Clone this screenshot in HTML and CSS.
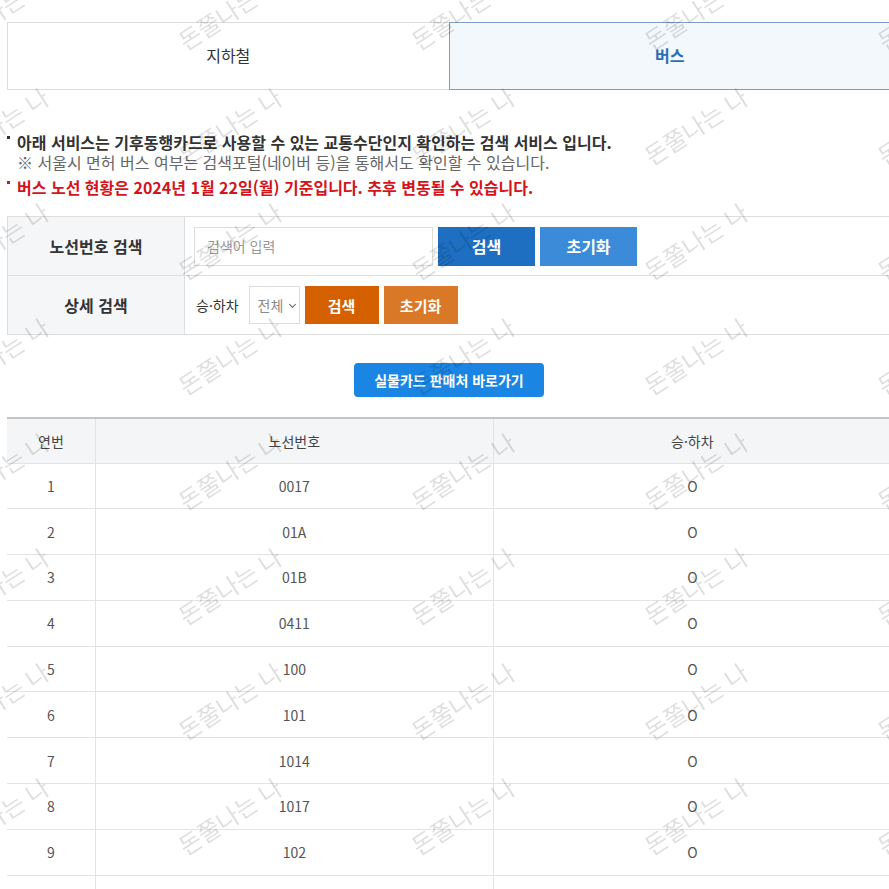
FILE: index.html
```html
<!DOCTYPE html>
<html lang="ko">
<head>
    <meta charset="UTF-8">
    <meta name="viewport" content="width=device-width, initial-scale=1.0">
    <title>기후동행카드 사용처 검색</title>
    <link rel="stylesheet" href="styles.css">
</head>
<body>

<div class="wrap">
    <div class="tabs">
        <a class="tab">지하철</a>
        <a class="tab active">버스</a>
    </div>

    <div class="notice">
        <p class="bullet">아래 서비스는 기후동행카드로 사용할 수 있는 교통수단인지 확인하는 검색 서비스 입니다.</p>
        <p class="sub">※ 서울시 면허 버스 여부는 검색포털(네이버 등)을 통해서도 확인할 수 있습니다.</p>
        <p class="bullet red">버스 노선 현황은 2024년 1월 22일(월) 기준입니다. 추후 변동될 수 있습니다.</p>
    </div>

    <div class="search-box">
        <div class="search-row">
            <div class="label">노선번호 검색</div>
            <div class="field">
                <input type="text" class="keyword" placeholder="검색어 입력">
                <button class="btn btn-blue">검색</button>
                <button class="btn btn-blue-light">초기화</button>
            </div>
        </div>
        <div class="search-row">
            <div class="label">상세 검색</div>
            <div class="field">
                <span class="field-name">승·하차</span>
                <span class="sel-wrap">
                    <select class="sel">
                        <option>전체</option>
                        <option>O</option>
                        <option>X</option>
                    </select>
                </span>
                <button class="btn btn-orange small">검색</button>
                <button class="btn btn-orange-light small">초기화</button>
            </div>
        </div>
    </div>

    <div class="link-area">
        <a class="link-btn">실물카드 판매처 바로가기</a>
    </div>

    <table class="list">
        <colgroup>
            <col style="width: 10%">
            <col style="width: 45%">
            <col style="width: 45%">
        </colgroup>
        <thead>
            <tr><th>연번</th><th>노선번호</th><th>승·하차</th></tr>
        </thead>
        <tbody>
            <tr><td>1</td><td>0017</td><td>O</td></tr>
            <tr><td>2</td><td>01A</td><td>O</td></tr>
            <tr><td>3</td><td>01B</td><td>O</td></tr>
            <tr><td>4</td><td>0411</td><td>O</td></tr>
            <tr><td>5</td><td>100</td><td>O</td></tr>
            <tr><td>6</td><td>101</td><td>O</td></tr>
            <tr><td>7</td><td>1014</td><td>O</td></tr>
            <tr><td>8</td><td>1017</td><td>O</td></tr>
            <tr><td>9</td><td>102</td><td>O</td></tr>
            <tr><td></td><td></td><td></td></tr>
        </tbody>
    </table>
</div>

<!-- watermark overlay -->
<div class="watermark"><div class="wm-grid" id="wmGrid"></div></div>

<script>
    var grid = document.getElementById("wmGrid");
    for (var i = 0; i < 45; i++) {
        var cell = document.createElement("div");
        cell.className = "wm";
        cell.innerHTML = "<span>돈쭐나는 나</span>";
        grid.appendChild(cell);
    }
</script>
</body>
</html>
```

FILE: styles.css
```css
* {
    box-sizing: border-box;
}
html {
    overflow: hidden;
}
body {
    margin: 0;
    font-family: "Noto Sans CJK KR", "Noto Sans", sans-serif;
    color: #333;
    background-color: #fff;
}
.wrap {
    width: 884px;
    margin-left: 7px;
    padding-top: 22px;
}

/* tabs */
.tabs {
    display: flex;
}
.tab {
    flex: 1;
    height: 68px;
    display: flex;
    align-items: center;
    justify-content: center;
    padding-bottom: 3px;
    font-size: 16px;
    color: #333;
    border: 1px solid #ddd;
    border-right: none;
}
.tab.active {
    background-color: #f3f8fd;
    border: 1px solid #7b9dbf;
    color: #2c6db4;
    font-weight: bold;
}

/* notice */
.notice {
    margin-top: 42px;
}
.notice p {
    margin: 0;
    font-size: 16px;
    line-height: 20px;
}
.bullet {
    font-weight: bold;
    color: #333;
}
.bullet::before {
    content: "";
    display: inline-block;
    width: 3px;
    height: 3px;
    background-color: currentColor;
    vertical-align: top;
    margin-top: 4px;
    margin-right: 7px;
}
.sub {
    padding-left: 10px;
    color: #666;
}
.notice .red {
    color: #d3141b;
    margin-top: 5px;
}

/* search box */
.search-box {
    margin-top: 19px;
    border-top: 1px solid #ddd;
    border-left: 1px solid #ddd;
}
.search-row {
    display: grid;
    grid-template-columns: 177px 1fr;
    height: 59px;
    border-bottom: 1px solid #ddd;
}
.label {
    background-color: #f5f6f8;
    border-right: 1px solid #ddd;
    display: flex;
    align-items: center;
    justify-content: center;
    font-size: 16px;
    font-weight: bold;
    color: #333;
}
.field {
    display: flex;
    align-items: center;
    gap: 5px;
    padding-left: 9px;
}
.keyword {
    width: 239px;
    height: 39px;
    border: 1px solid #ddd;
    padding: 0 12px;
    font-family: inherit;
    font-size: 14px;
    color: #333;
    outline: none;
}
.keyword::placeholder {
    color: #999;
}
.btn {
    height: 39px;
    width: 97px;
    border: none;
    color: #fff;
    font-family: inherit;
    font-size: 16px;
    font-weight: bold;
    cursor: pointer;
}
.btn.small {
    width: 74px;
    height: 38px;
    font-size: 15px;
}
.btn-blue {
    background-color: #1e6fc1;
}
.btn-blue-light {
    background-color: #3b8bd9;
}
.btn-orange {
    background-color: #d46000;
}
.btn-orange-light {
    background-color: #d97827;
}
.field-name {
    font-size: 14px;
    color: #333;
    margin-left: 2px;
    margin-right: 5px;
}
.sel-wrap {
    position: relative;
    display: block;
}
.sel-wrap::after {
    content: "";
    position: absolute;
    right: 5px;
    top: 16px;
    width: 4px;
    height: 4px;
    border-right: 1px solid #666;
    border-bottom: 1px solid #666;
    transform: rotate(45deg);
    pointer-events: none;
}
.sel {
    display: block;
    width: 51px;
    height: 38px;
    border: 1px solid #ddd;
    background-color: #fff;
    font-family: inherit;
    font-size: 14px;
    color: #888;
    padding: 0 0 0 8px;
    appearance: none;
    -webkit-appearance: none;
    border-radius: 0;
}

/* link button */
.link-area {
    display: flex;
    justify-content: center;
    margin-top: 28px;
}
.link-btn {
    display: flex;
    align-items: center;
    justify-content: center;
    width: 190px;
    height: 34px;
    background-color: #1a85e2;
    border-radius: 4px;
    color: #fff;
    font-size: 14px;
    font-weight: bold;
}

/* list table */
.list {
    width: 100%;
    margin-top: 20px;
    border-collapse: collapse;
    border-top: 2px solid #c4c4c4;
    table-layout: fixed;
}
.list th {
    height: 45px;
    background-color: #f4f5f7;
    font-size: 14px;
    font-weight: normal;
    color: #444;
    border-bottom: 1px solid #e3e3e3;
}
.list td {
    height: 45.8px;
    text-align: center;
    font-size: 14px;
    color: #555;
    border-bottom: 1px solid #e3e3e3;
}
.list th + th,
.list td + td {
    border-left: 1px solid #e3e3e3;
}

/* watermark */
.watermark {
    position: fixed;
    left: 0;
    top: 0;
    width: 100%;
    height: 100%;
    overflow: hidden;
    pointer-events: none;
    z-index: 10;
}
.wm-grid {
    position: absolute;
    left: -120px;
    top: -47px;
    display: grid;
    grid-template-columns: repeat(5, 233px);
    grid-auto-rows: 115px;
}
.wm {
    display: flex;
    align-items: center;
    justify-content: center;
}
.wm span {
    display: block;
    white-space: nowrap;
    font-size: 24px;
    color: rgba(0, 0, 0, 0.13);
    transform: rotate(-33deg);
}
```
